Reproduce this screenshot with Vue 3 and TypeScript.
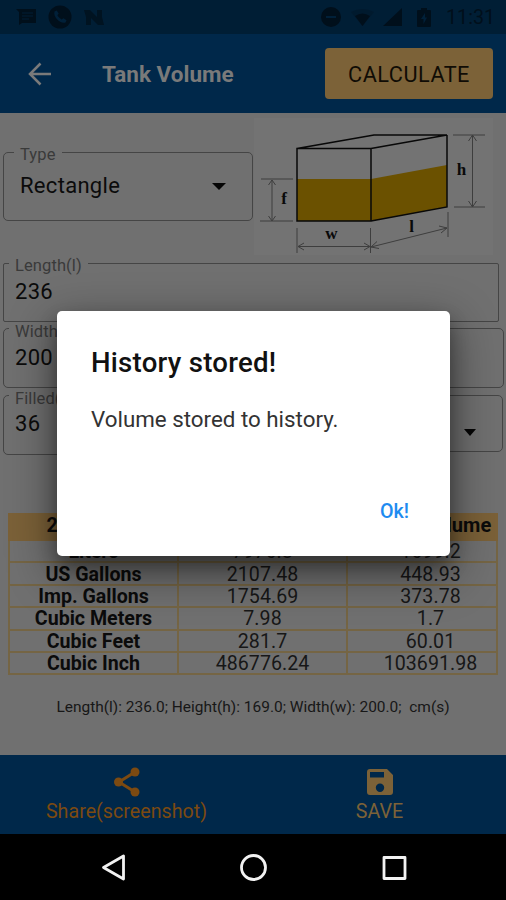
<script setup lang="ts">
interface Row {
  unit: string
  total: string
  filled: string
}

const rows: Row[] = [
  { unit: 'Liters', total: '7976.8', filled: '1699.2' },
  { unit: 'US Gallons', total: '2107.48', filled: '448.93' },
  { unit: 'Imp. Gallons', total: '1754.69', filled: '373.78' },
  { unit: 'Cubic Meters', total: '7.98', filled: '1.7' },
  { unit: 'Cubic Feet', total: '281.7', filled: '60.01' },
  { unit: 'Cubic Inch', total: '486776.24', filled: '103691.98' },
]
</script>

<template>
  <div class="screen">
    <div class="status">
      <svg class="s-msg" width="20" height="18" viewBox="0 0 20 18">
        <path d="M0 1H20V15H6L3 17V4Z" fill="#000f1b" />
        <path d="M6 5H17M6 8H17M6 11H13" stroke="#001a2e" stroke-width="1.3" />
      </svg>
      <svg class="s-call" width="24" height="24" viewBox="0 0 24 24">
        <circle cx="12" cy="12" r="11.5" fill="#000f1b" />
        <path d="M6.5 6.5l2.2-1 2 3-1.3 1.8c.8 1.6 2.4 3.2 4.2 4.1l1.9-1.2 3 2-1 2.4C12 19 5 12 6.5 6.5Z" fill="#002039" />
      </svg>
      <svg class="s-n" width="20" height="17" viewBox="0 0 20 17">
        <path d="M0 1H6L13 8V1H18V8L20 16H14L7 9V16H2V8Z" fill="#001321" />
      </svg>
      <span class="spacer"></span>
      <svg class="s-dnd" width="20" height="20" viewBox="0 0 20 20">
        <circle cx="10" cy="10" r="10" fill="#000f1b" />
        <path d="M5 10H15" stroke="#002039" stroke-width="2" />
      </svg>
      <svg class="s-wifi" width="23" height="17" viewBox="0 0 23 17">
        <path d="M0 3Q11.5-3 23 3L11.5 17Z" fill="#001a2e" />
        <path d="M4 7Q11.500 2 19 7L11.500 17Z" fill="#000f1b" />
      </svg>
      <svg class="s-cell" width="19" height="18" viewBox="0 0 19 18">
        <path d="M0 18L19 0V18Z" fill="#000f1b" />
      </svg>
      <svg class="s-bat" width="14" height="19" viewBox="0 0 14 19">
        <path d="M4 0H10V2H13Q14 2 14 3V18Q14 19 13 19H1Q0 19 0 18V3Q0 2 1 2H4Z" fill="#000f1b" />
        <path d="M8 5L4 11H6.500V16L10 9.500H8Z" fill="#002039" />
      </svg>
      <span class="clock">11:31</span>
    </div>

    <header class="appbar">
      <svg class="back" width="24" height="24" viewBox="0 0 24 24">
        <path d="M23 12H2M12.500 1.500L2 12L12.500 22.500" fill="none" stroke="#7a7a7a" stroke-width="2.500" />
      </svg>
      <h1>Tank Volume</h1>
      <button class="calc">CALCULATE</button>
    </header>

    <main class="content">
      <div class="top">
        <fieldset class="field type">
          <legend>Type</legend>
          <span>Rectangle</span>
          <svg width="14" height="7" viewBox="0 0 14 7"><path d="M0 0H14L7 7Z" fill="#050505" /></svg>
        </fieldset>
        <svg class="tank" width="239" height="137" viewBox="254 118 239 137">
          <rect x="254" y="118" width="239" height="137" fill="#737373" />
          <path d="M297 179H371L447 165V207L371 221H297Z" fill="#6b5100" />
          <path d="M297 148.500H371V221H297ZM297 148.500L374 135H447L371 148.500M447 135V207L371 221" fill="none" stroke="#080808" stroke-width="1.500" />
          <g fill="none" stroke="#3e3e3e" stroke-width="1">
            <path d="M261 179H293M260 221H293M272 180V220M268.500 185L272 180L275.500 185M268.500 216L272 221L275.500 216" />
            <path d="M297 228V253M370.500 228V253M298 246.500H370M304 243L298 246.500L304 250M364 243L370 246.500L364 250" />
            <path d="M448 212V237M371 247L447 228M377 241.500L371 247L379 248.500M439 226L447 228L441 233" />
            <path d="M453 135H485M454 207H485M472.500 135V207M468.500 141L472.500 135L476.500 141M468.500 201L472.500 207L476.500 201" />
          </g>
          <g class="dims">
            <text x="284" y="204">f</text>
            <text x="331.500" y="239">w</text>
            <text x="411.500" y="232">l</text>
            <text x="461.500" y="175">h</text>
          </g>
        </svg>
      </div>

      <fieldset class="field length"><legend>Length(l)</legend><span>236</span></fieldset>
      <fieldset class="field width"><legend>Width(w)</legend><span>200</span></fieldset>
      <div class="pair">
        <fieldset class="field filled"><legend>Filled(f)</legend><span>36</span></fieldset>
        <div class="field unit">
          <svg width="12" height="7" viewBox="0 0 12 7"><path d="M0 0H12L6 7Z" fill="#050505" /></svg>
        </div>
      </div>

      <table class="results">
        <thead>
          <tr><th>236.00 cm</th><th>Total Volume</th><th>Filled Volume</th></tr>
        </thead>
        <tbody>
          <tr v-for="row in rows" :key="row.unit">
            <th>{{ row.unit }}</th>
            <td>{{ row.total }}</td>
            <td>{{ row.filled }}</td>
          </tr>
        </tbody>
      </table>
      <p class="summary">Length(l): 236.0; Height(h): 169.0; Width(w): 200.0;&nbsp; cm(s)</p>
    </main>

    <footer class="actions">
      <div class="action share">
        <svg width="26" height="30" viewBox="0 0 26 30">
          <path d="M21 5L5 15L21 25" fill="none" stroke="#7c4a11" stroke-width="3" />
          <g fill="#7c4a11"><circle cx="21" cy="5" r="4.500" /><circle cx="4.500" cy="15" r="4.500" /><circle cx="21" cy="25" r="4.500" /></g>
        </svg>
        <span>Share(screenshot)</span>
      </div>
      <div class="action save">
        <svg width="26" height="30" viewBox="0 0 26 30">
          <path fill-rule="evenodd" d="M3 2H20L26 8V25Q26 28 23 28H3Q0 28 0 25V5Q0 2 3 2ZM3 5V10.500H17V5ZM13 16.500A4.200 4.200 0 1 0 13 24.900A4.200 4.200 0 1 0 13 16.500Z" fill="#7c6238" />
        </svg>
        <span>SAVE</span>
      </div>
    </footer>

    <nav class="nav">
      <svg width="506" height="67" viewBox="0 0 506 67" fill="none" stroke="#f2f2f2" stroke-width="2.800" stroke-linejoin="round">
        <path d="M123.500 22V45L103.500 33.500Z" />
        <circle cx="253.500" cy="33.500" r="12" />
        <rect x="384" y="23.500" width="21" height="21" />
      </svg>
    </nav>

    <section class="dialog" role="dialog">
      <h2>History stored!</h2>
      <p>Volume stored to history.</p>
      <button>Ok!</button>
    </section>
  </div>
</template>

<style>
body { margin: 0; background: #000; }
</style>

<style scoped>
* { box-sizing: border-box; }
.screen { position: relative; width: 506px; height: 900px; overflow: hidden; display: flex; flex-direction: column; background: #707070; font-family: Roboto, "Liberation Sans", sans-serif; color: #0b0b0b; }
button { border: 0; font: inherit; }
.status { height: 34px; flex: none; background: #001e35; display: flex; align-items: center; padding: 0 13px 0 16px; }
.s-call { margin-left: 12px; }
.s-n { margin-left: 12px; }
.spacer { flex: 1; }
.s-wifi { margin-left: 10px; }
.s-cell { margin-left: 9px; }
.s-bat { margin-left: 15px; }
.clock { width: 47px; margin-left: 15px; font-size: 19.700px; color: #000f1b; white-space: nowrap; }
.appbar { height: 79px; flex: none; background: #00284a; display: flex; align-items: center; padding: 0 13px 0 28px; }
.appbar h1 { margin: 0 0 0 50px; flex: 1; font-size: 22.500px; font-weight: 700; color: #7a7a7a; }
.calc { width: 168px; height: 51px; border-radius: 4px; background: #7c6238; color: #100c05; font-size: 21.700px; letter-spacing: .5px; padding: 1px 0 0; }
.content { flex: none; height: 642px; display: flex; flex-direction: column; }
.top { display: flex; height: 142px; padding: 5px 0 0 3px; }
.field { margin: 0; border: 1.500px solid #454545; border-radius: 5px; min-width: 0; padding: 0 0 0 11px; font-size: 22px; letter-spacing: .3px; }
.field legend { height: 2px; line-height: 8px; font-size: 16.500px; letter-spacing: .1px; color: #3a3a3a; padding: 0 6px; margin-left: -6px; white-space: nowrap; }
.width legend, .filled legend { line-height: 10px; }
.field span { display: block; }
.type { width: 250px; height: 70px; margin-top: 33px; padding: 0 26px 2px 16px; display: flex; align-items: center; justify-content: space-between; }
.type svg { margin-top: 2px; }
.tank { margin-left: 1px; flex: none; }
.dims { font-family: "Liberation Serif", serif; font-weight: 700; font-size: 17px; text-anchor: middle; fill: #0a0a0a; }
.length, .width { margin-left: 3px; flex: none; }
.length { width: 496px; height: 60px; margin-top: 7px; line-height: 56px; border-radius: 2px; }
.width { width: 501px; height: 61px; margin-top: 5px; line-height: 57px; }
.pair { display: flex; gap: 4px; margin: 6px 3px 0; }
.filled { flex: 1; height: 61px; line-height: 56px; }
.unit { flex: 1; height: 57px; margin-top: 1px; padding: 18px 26px 0 0; display: flex; align-items: center; justify-content: flex-end; }
.results { width: 490px; height: 160px; margin: 58px 0 0 8px; table-layout: fixed; border-collapse: collapse; font-size: 19.600px; }
.results th, .results td { height: 22.400px; padding: 1px 0 0; line-height: 19px; text-align: center; border: 2px solid #756544; }
.results td { color: #171717; letter-spacing: .05px; }
.results th:nth-child(1), .results th:nth-child(2) { width: 169px; }
.results th:nth-child(3), .results td:nth-child(3) { padding-left: 17px; }
.results thead th { height: 26px; padding-top: 0; padding-bottom: 3px; background: #7b6138; border-color: #7b6138; white-space: nowrap; }
.results thead th:nth-child(3) { font-size: 20px; padding-left: 16px; }
.summary { margin: 22px 0 0; text-align: center; font-size: 15.480px; line-height: 20px; color: #171717; }
.actions { height: 79px; flex: none; background: #00284a; display: grid; grid-template-columns: 1fr 1fr; }
.action { display: flex; flex-direction: column; align-items: center; padding-top: 12px; font-size: 19.700px; line-height: 24px; }
.action span { margin-top: 3px; }
.action svg { flex: none; }
.share { color: #7c4a11; }
.save { color: #7c6238; }
.nav { height: 66px; flex: none; background: #000; }
.dialog { position: absolute; left: 57px; top: 311px; width: 393px; height: 245px; border-radius: 5px; background: #fff; box-shadow: 0 15px 45px 4px rgba(0,0,0,.42), 0 10px 18px rgba(0,0,0,.3); padding: 34px; display: flex; flex-direction: column; }
.dialog h2 { margin: 0; font-size: 27.600px; letter-spacing: .25px; line-height: 35px; font-weight: 500; color: #111; white-space: nowrap; }
.dialog p { margin: 25px 0 0; font-size: 22.350px; line-height: 28px; color: #333; white-space: nowrap; }
.dialog button { margin: 70px 7px 0 auto; padding: 0; background: none; color: #1e8bf0; font-size: 19.700px; line-height: 18px; font-weight: 500; }
</style>
